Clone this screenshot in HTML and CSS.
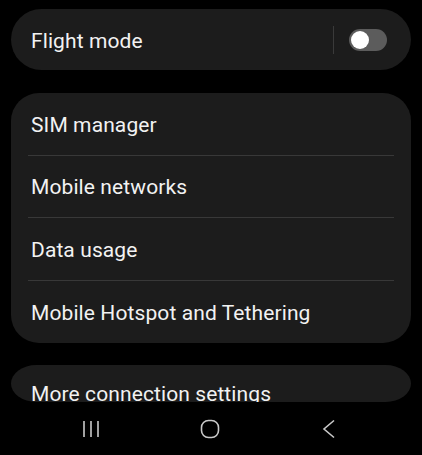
FILE: index.html
```html
<!DOCTYPE html>
<html>
<head>
    <title>Connections</title>
    <link rel="stylesheet" href="styles.css">
</head>
<body>

<div class="screen">

    <div class="card single">
        <span class="label">Flight mode</span>
        <div class="switch-area">
            <span class="vline"></span>
            <span class="switch"><span class="knob"></span></span>
        </div>
    </div>

    <div class="card list">
        <div class="row"><span class="label">SIM manager</span></div>
        <div class="row"><span class="label">Mobile networks</span></div>
        <div class="row"><span class="label">Data usage</span></div>
        <div class="row"><span class="label">Mobile Hotspot and Tethering</span></div>
    </div>

    <div class="card cut">
        <span class="label">More connection settings</span>
    </div>

</div>

<div class="navbar">
    <svg class="nav-icon" width="20" height="20" viewBox="0 0 20 20">
        <path d="M3 2v16M10 2v16M17 2v16" stroke="#c9c9c9" stroke-width="1.6" fill="none"/>
    </svg>
    <svg class="nav-icon" width="20" height="20" viewBox="0 0 20 20">
        <rect x="1.5" y="1.5" width="17" height="17" rx="7" stroke="#c9c9c9" stroke-width="1.6" fill="none"/>
    </svg>
    <svg class="nav-icon" width="20" height="20" viewBox="0 0 20 20">
        <path d="M15 1.5L5 10l10 8.5" stroke="#c9c9c9" stroke-width="1.6" fill="none"/>
    </svg>
</div>

</body>
</html>
```

FILE: styles.css
```css
body {
    margin: 0;
    background-color: #000000;
    font-family: Roboto, "Noto Sans", sans-serif;
    color: #f2f2f2;
    width: 422px;
    height: 455px;
    overflow: hidden;
}

.screen {
    padding: 9px 11px 0;
    display: flex;
    flex-direction: column;
    gap: 23px;
}

.card {
    background-color: #1c1c1c;
}

.label {
    font-size: 21px;
    line-height: 24px;
    letter-spacing: 0.1px;
}

.single {
    height: 61px;
    border-radius: 31px;
    display: flex;
    align-items: center;
    justify-content: space-between;
    padding: 2px 24px 0 20px;
    box-sizing: border-box;
}

.switch-area {
    display: flex;
    align-items: center;
    gap: 15px;
    margin-top: -2px;
}

.vline {
    width: 1px;
    height: 28px;
    background-color: #3a3a3a;
}

.switch {
    width: 38px;
    height: 22px;
    border-radius: 11px;
    background-color: #5c5c5c;
    display: flex;
    align-items: center;
    padding-left: 2px;
    box-sizing: border-box;
}

.knob {
    width: 18px;
    height: 18px;
    border-radius: 50%;
    background-color: #ffffff;
}

.list {
    border-radius: 28px;
    padding: 0 17px;
}

.row {
    height: 62.5px;
    display: flex;
    align-items: center;
    padding: 2px 3px 0;
    box-sizing: border-box;
    border-bottom: 1px solid #383838;
}

.row:last-child {
    border-bottom: none;
}

.cut {
    margin-top: -1px;
    height: 37px;
    border-radius: 26px / 19px;
    overflow: hidden;
    padding: 17px 20px 0;
    box-sizing: border-box;
}

.navbar {
    height: 53px;
    display: flex;
    justify-content: center;
    align-items: center;
    gap: 99px;
    padding-right: 3px;
}
```
